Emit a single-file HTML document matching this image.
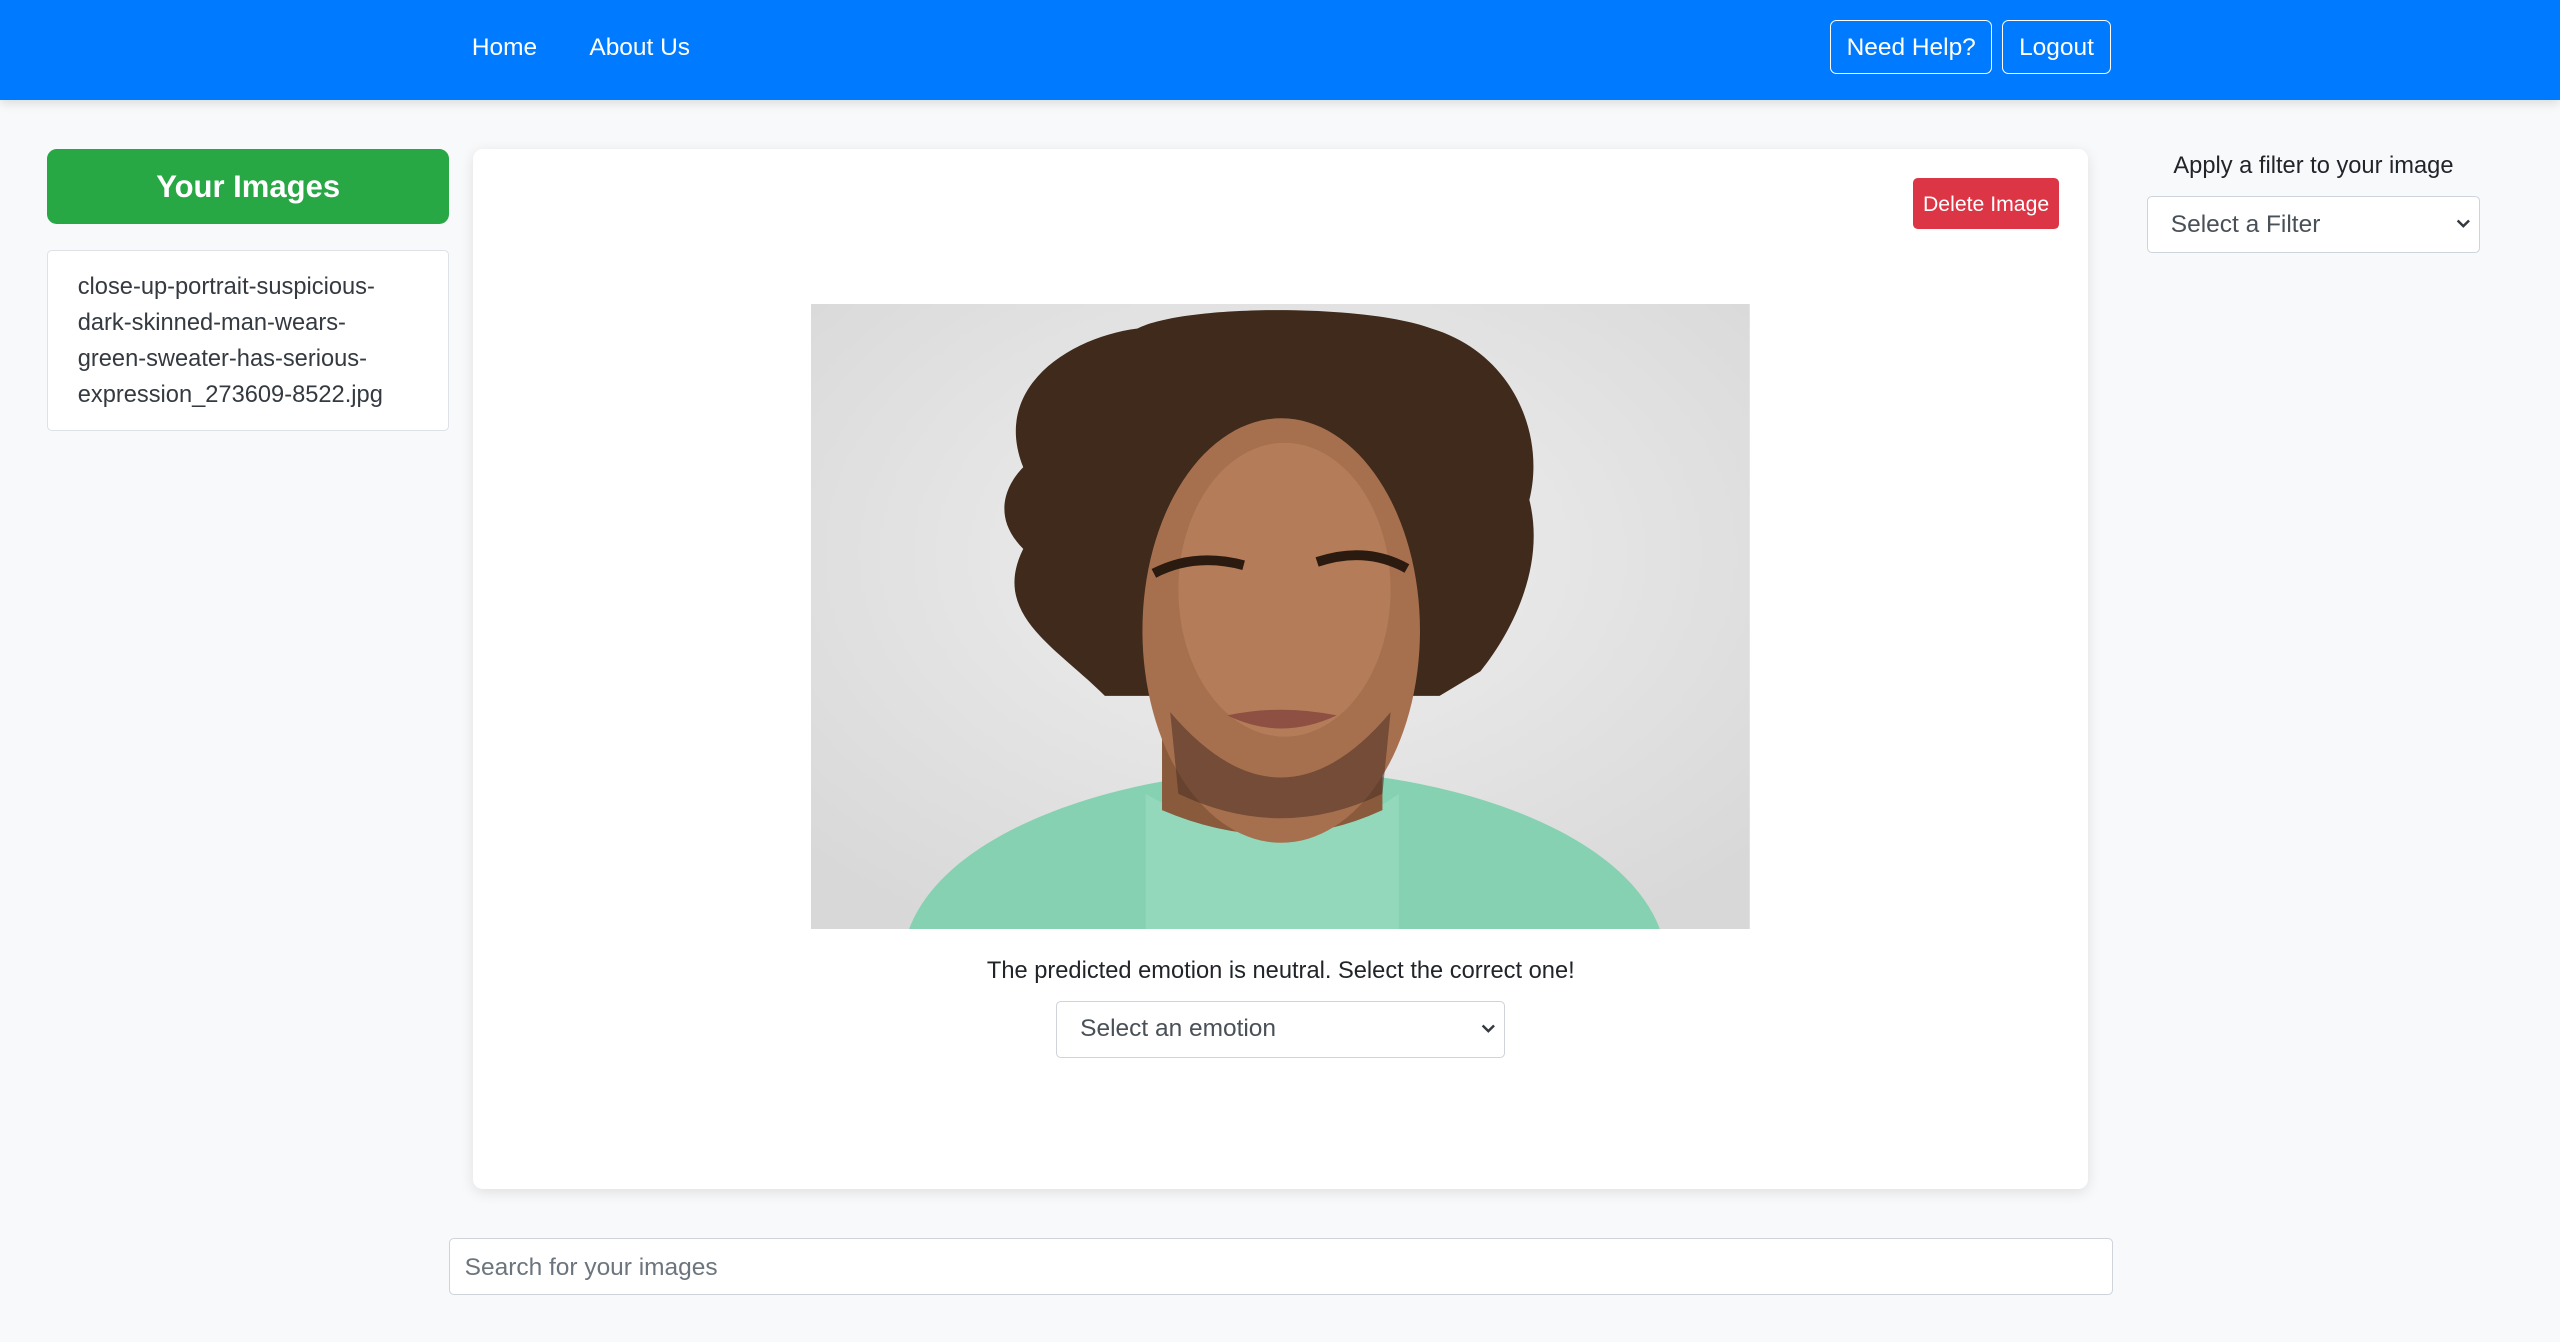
<!DOCTYPE html>
<html><head><meta charset="utf-8"><style>
html,body{margin:0;padding:0}
body{width:1568px;height:822px;zoom:1.63265;background:#f8f9fa;font-family:"Liberation Sans",Arial,sans-serif;color:#212529;position:relative;overflow:hidden}
.nav{position:absolute;left:0;top:0;width:1568px;height:61px;background:#007bff;box-shadow:0 2px 6px rgba(0,0,0,.12)}
.nav a{position:absolute;top:21px;color:#fff;font-size:15px}
.ob{position:absolute;top:12px;height:32px;border:1px solid #fff;border-radius:4px;color:#fff;font-size:15px;line-height:33px;text-align:center;box-sizing:content-box}
.abs{position:absolute}
.green{left:29px;top:91px;width:246px;height:46px;background:#28a745;border-radius:6px;color:#fff;font-weight:bold;font-size:19px;text-align:center;line-height:46px}
.list{left:29px;top:153px;width:246px;height:111px;background:#fff;border:1px solid #dee2e6;border-radius:3px;font-size:14.5px;line-height:22px;color:#343a40;padding:12px 0 0 18px;box-sizing:border-box}
.card{left:290px;top:91px;width:989px;height:637px;background:#fff;border-radius:6px;box-shadow:0 2px 8px rgba(0,0,0,.1)}
.del{left:1172px;top:109px;width:89px;height:31px;background:#dc3545;border-radius:3px;color:#fff;font-size:13px;text-align:center;line-height:33px}
.sel{background:#fff;border:1px solid #ced4da;border-radius:3px;box-sizing:border-box;font-size:15px;color:#495057;padding-left:14px}
.sel svg{position:absolute;right:5px;top:50%;margin-top:-4px}
</style></head><body>
<div class="nav">
<a style="left:289px">Home</a><a style="left:361px">About Us</a>
<div class="ob" style="left:1121px;width:98px">Need Help?</div>
<div class="ob" style="left:1226px;width:66px">Logout</div>
</div>
<div class="abs green">Your Images</div>
<div class="abs list">close-up-portrait-suspicious-<br>dark-skinned-man-wears-<br>green-sweater-has-serious-<br>expression_273609-8522.jpg</div>
<div class="abs card"></div>
<div class="abs del">Delete Image</div>
<svg class="abs" style="left:497px;top:186px" width="575" height="383" viewBox="0 0 575 383">
<defs><radialGradient id="bg" cx="50%" cy="40%" r="70%"><stop offset="0" stop-color="#f0f0f0"/><stop offset="1" stop-color="#d8d8d8"/></radialGradient></defs>
<rect width="575" height="383" fill="url(#bg)"/>
<path d="M60 383 C80 330 160 300 230 290 L350 290 C420 300 500 330 520 383Z" fill="#86d1b2"/>
<path d="M205 300 Q290 350 360 300 L360 383 L205 383Z" fill="#93d8bb"/>
<path d="M215 250 L215 310 Q285 340 350 310 L350 250Z" fill="#8a5a3c"/>
<path d="M130 100 C110 50 160 20 200 15 C230 0 340 0 380 15 C430 30 450 80 440 120 C450 160 430 200 410 225 L385 240 L180 240 C150 210 110 190 130 150 C110 130 120 110 130 100Z" fill="#3f2a1c"/>
<ellipse cx="288" cy="200" rx="85" ry="130" fill="#a6704f"/>
<ellipse cx="290" cy="175" rx="65" ry="90" fill="#b47c58"/>
<path d="M210 165 Q235 152 265 160" stroke="#2b1a10" stroke-width="6" fill="none"/>
<path d="M310 158 Q340 148 365 162" stroke="#2b1a10" stroke-width="6" fill="none"/>
<path d="M220 250 Q288 330 355 250 L350 300 Q288 330 225 300Z" fill="#4a3024" opacity=".55"/>
<path d="M255 252 Q288 245 322 252 Q288 268 255 252Z" fill="#8e5042"/>
</svg>
<div class="abs" style="left:290px;top:587px;width:989px;text-align:center;font-size:14.5px">The predicted emotion is neutral. Select the correct one!</div>
<div class="abs sel" style="left:647px;top:613px;width:275px;height:35px;line-height:33px">Select an emotion<svg width="9" height="7" viewBox="0 0 9 7"><path d="M1 1.5 L4.5 5 L8 1.5" stroke="#343a40" stroke-width="1.5" fill="none"/></svg></div>
<div class="abs" style="left:1315px;top:94px;width:204px;text-align:center;font-size:14.5px">Apply a filter to your image</div>
<div class="abs sel" style="left:1315px;top:120px;width:204px;height:35px;line-height:34px">Select a Filter<svg width="9" height="7" viewBox="0 0 9 7"><path d="M1 1.5 L4.5 5 L8 1.5" stroke="#343a40" stroke-width="1.5" fill="none"/></svg></div>
<div class="abs sel" style="left:275px;top:758px;width:1019px;height:35px;line-height:35px;color:#6c757d;padding-left:9px">Search for your images</div>
</body></html>
